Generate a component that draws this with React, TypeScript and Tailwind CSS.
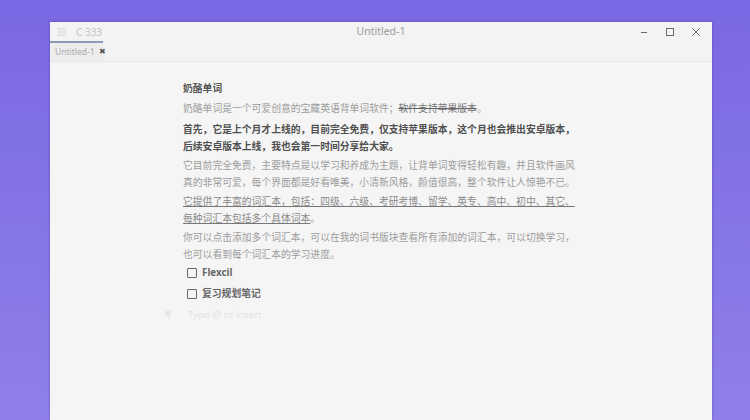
export default function App() {
  const cjk = { fontFamily: '"Noto Sans", "Noto Sans CJK SC", sans-serif' };

  return (
    <div className="w-[750px] h-[420px] overflow-hidden bg-gradient-to-b from-[#7a68e4] to-[#8f80e9] pt-[22px] pl-[50px]" style={cjk}>
      <div className="w-[662px] h-[398px] bg-[#f5f5f5] shadow-[0_0_3px_rgba(40,20,120,0.35)] flex flex-col">
        {/* Title bar */}
        <div className="h-[19px] flex items-center relative bg-[#f3f3f3]">
          <div className="flex items-center pl-[7px] gap-[10px]">
            <svg width="9" height="8" viewBox="0 0 9 8" className="text-[#cfcfcf]">
              <path d="M0 1h9M0 4h9M0 7h9" stroke="currentColor" strokeWidth="1" />
            </svg>
            <span className="text-[10px] text-[#c4c4c4] leading-none whitespace-nowrap">C 333</span>
          </div>
          <span className="absolute left-1/2 -translate-x-1/2 text-[10.5px] text-[#9a9a9a] leading-none whitespace-nowrap">Untitled-1</span>
          <div className="ml-auto flex items-center gap-[18px] pr-[12px] text-[#6b6b6b]">
            <svg width="8" height="8" viewBox="0 0 8 8">
              <path d="M1 4.5h6" stroke="currentColor" strokeWidth="1" />
            </svg>
            <svg width="8" height="8" viewBox="0 0 8 8">
              <rect x="0.5" y="0.5" width="7" height="7" fill="none" stroke="currentColor" strokeWidth="1" />
            </svg>
            <svg width="8" height="8" viewBox="0 0 8 8">
              <path d="M0.5 0.5l7 7M7.5 0.5l-7 7" stroke="currentColor" strokeWidth="1" />
            </svg>
          </div>
        </div>

        {/* Tab bar */}
        <div className="h-[21px] flex bg-[#f3f3f3] border-b border-[#e8e8e8]">
          <div className="w-[53px] border-t-2 border-[#8d99b6] bg-[#ededed] flex items-center pl-[5px] gap-[4px] whitespace-nowrap">
            <span className="text-[8.5px] text-[#ababab] leading-none">Untitled-1</span>
            <span className="text-[7.5px] text-[#555] leading-none">✖</span>
          </div>
        </div>

        {/* Editor */}
        <div className="flex-1 pl-[133px] pt-[18px] text-[9.8px] leading-[17px]">
          <div className="w-[400px] flex flex-col gap-[2px]">
            <p className="font-bold text-[#555]">奶酪单词</p>
            <p className="text-[#9c9c9c] whitespace-nowrap mt-[1px]">
              奶酪单词是一个可爱创意的宝藏英语背单词软件；<span className="line-through decoration-[#666] text-[#777]">软件支持苹果版本</span>。
            </p>
            <p className="font-bold text-[#4f4f4f] whitespace-nowrap mt-[2px]">
              首先，它是上个月才上线的，目前完全免费，仅支持苹果版本，这个月也会推出安卓版本，
              <br />
              后续安卓版本上线，我也会第一时间分享给大家。
            </p>
            <p className="text-[#9c9c9c] whitespace-nowrap">
              它目前完全免费，主要特点是以学习和养成为主题，让背单词变得轻松有趣，并且软件画风
              <br />
              真的非常可爱，每个界面都是好看唯美，小清新风格，颜值很高，整个软件让人惊艳不已。
            </p>
            <p className="text-[#8a8a8a] whitespace-nowrap">
              <span className="underline decoration-[#777]">它提供了丰富的词汇本，包括：四级、六级、考研考博、留学、英专、高中、初中、其它、</span>
              <br />
              <span className="underline decoration-[#777]">每种词汇本包括多个具体词本</span>。
            </p>
            <p className="text-[#9c9c9c] whitespace-nowrap">
              你可以点击添加多个词汇本，可以在我的词书版块查看所有添加的词汇本，可以切换学习，
              <br />
              也可以看到每个词汇本的学习进度。
            </p>
            <div className="flex items-center gap-[5px] pl-[4px] -mt-[1px]">
              <span className="w-[10px] h-[10px] border border-[#666] rounded-[1px]" />
              <span className="font-bold text-[#666]">Flexcil</span>
            </div>
            <div className="flex items-center gap-[5px] pl-[4px] mt-[2px]">
              <span className="w-[10px] h-[10px] border border-[#666] rounded-[1px]" />
              <span className="font-bold text-[#666]">复习规划笔记</span>
            </div>
            <div className="flex items-center -ml-[18px] mt-[2px] text-[#e2e2e2]">
              <span className="w-[23px]">¶</span>
              <span>Type @ to insert</span>
            </div>
          </div>
        </div>
      </div>
    </div>
  );
}
